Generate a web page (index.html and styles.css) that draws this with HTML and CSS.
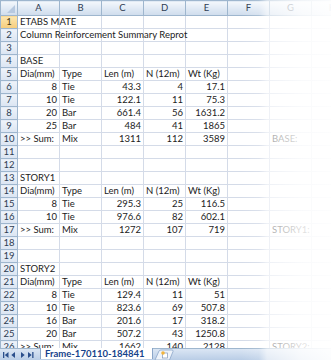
FILE: index.html
```html
<!DOCTYPE html>
<html lang="en">
<head>
  <meta charset="UTF-8" />
  <title>Frame-170110-184841</title>
  <link rel="stylesheet" href="styles.css">
</head>
<body>
  <div class="window">
    <div class="sheet">
      <table class="grid">
        <colgroup>
          <col class="c-rh">
          <col class="c-col"><col class="c-col"><col class="c-col"><col class="c-col">
          <col class="c-col"><col class="c-col"><col class="c-col"><col class="c-col">
        </colgroup>
        <thead>
          <tr>
            <th class="corner"><span class="tri"></span></th>
            <th>A</th><th>B</th><th>C</th><th>D</th><th>E</th><th>F</th><th>G</th><th>H</th>
          </tr>
        </thead>
        <tbody>
          <tr><th class="active">1</th><td class="over">ETABS MATE</td><td></td><td></td><td></td><td></td><td></td><td></td><td></td></tr>
          <tr><th>2</th><td class="over">Column Reinforcement Summary Reprot</td><td></td><td></td><td></td><td></td><td></td><td></td><td></td></tr>
          <tr><th>3</th><td></td><td></td><td></td><td></td><td></td><td></td><td></td><td></td></tr>
          <tr><th>4</th><td>BASE</td><td></td><td></td><td></td><td></td><td></td><td></td><td></td></tr>
          <tr><th>5</th><td>Dia(mm)</td><td>Type</td><td>Len (m)</td><td class="over">N (12m)</td><td>Wt (Kg)</td><td></td><td></td><td></td></tr>
          <tr><th>6</th><td class="n">8</td><td>Tie</td><td class="n">43.3</td><td class="n">4</td><td class="n">17.1</td><td></td><td></td><td></td></tr>
          <tr><th>7</th><td class="n">10</td><td>Tie</td><td class="n">122.1</td><td class="n">11</td><td class="n">75.3</td><td></td><td></td><td></td></tr>
          <tr><th>8</th><td class="n">20</td><td>Bar</td><td class="n">661.4</td><td class="n">56</td><td class="n">1631.2</td><td></td><td></td><td></td></tr>
          <tr><th>9</th><td class="n">25</td><td>Bar</td><td class="n">484</td><td class="n">41</td><td class="n">1865</td><td></td><td></td><td></td></tr>
          <tr><th>10</th><td>&gt;&gt; Sum:</td><td>Mix</td><td class="n">1311</td><td class="n">112</td><td class="n">3589</td><td></td><td class="over">BASE:</td><td></td></tr>
          <tr><th>11</th><td></td><td></td><td></td><td></td><td></td><td></td><td></td><td></td></tr>
          <tr><th>12</th><td></td><td></td><td></td><td></td><td></td><td></td><td></td><td></td></tr>
          <tr><th>13</th><td>STORY1</td><td></td><td></td><td></td><td></td><td></td><td></td><td></td></tr>
          <tr><th>14</th><td>Dia(mm)</td><td>Type</td><td>Len (m)</td><td class="over">N (12m)</td><td>Wt (Kg)</td><td></td><td></td><td></td></tr>
          <tr><th>15</th><td class="n">8</td><td>Tie</td><td class="n">295.3</td><td class="n">25</td><td class="n">116.5</td><td></td><td></td><td></td></tr>
          <tr><th>16</th><td class="n">10</td><td>Tie</td><td class="n">976.6</td><td class="n">82</td><td class="n">602.1</td><td></td><td></td><td></td></tr>
          <tr><th>17</th><td>&gt;&gt; Sum:</td><td>Mix</td><td class="n">1272</td><td class="n">107</td><td class="n">719</td><td></td><td class="over">STORY1:</td><td></td></tr>
          <tr><th>18</th><td></td><td></td><td></td><td></td><td></td><td></td><td></td><td></td></tr>
          <tr><th>19</th><td></td><td></td><td></td><td></td><td></td><td></td><td></td><td></td></tr>
          <tr><th>20</th><td>STORY2</td><td></td><td></td><td></td><td></td><td></td><td></td><td></td></tr>
          <tr><th>21</th><td>Dia(mm)</td><td>Type</td><td>Len (m)</td><td class="over">N (12m)</td><td>Wt (Kg)</td><td></td><td></td><td></td></tr>
          <tr><th>22</th><td class="n">8</td><td>Tie</td><td class="n">129.4</td><td class="n">11</td><td class="n">51</td><td></td><td></td><td></td></tr>
          <tr><th>23</th><td class="n">10</td><td>Tie</td><td class="n">823.6</td><td class="n">69</td><td class="n">507.8</td><td></td><td></td><td></td></tr>
          <tr><th>24</th><td class="n">16</td><td>Bar</td><td class="n">201.6</td><td class="n">17</td><td class="n">318.2</td><td></td><td></td><td></td></tr>
          <tr><th>25</th><td class="n">20</td><td>Bar</td><td class="n">507.2</td><td class="n">43</td><td class="n">1250.8</td><td></td><td></td><td></td></tr>
          <tr class="last"><th>26</th><td>&gt;&gt; Sum:</td><td>Mix</td><td class="n">1662</td><td class="n">140</td><td class="n">2128</td><td></td><td class="over">STORY2:</td><td></td></tr>
        </tbody>
      </table>
    </div>

    <div class="tabbar">
      <div class="nav">
        <svg width="38" height="10" viewBox="0 0 38 10">
          <g fill="#2b4f8c">
            <rect x="3" y="2" width="1.3" height="6"/>
            <polygon points="8.5,2 8.5,8 4.8,5"/>
            <polygon points="15,2 15,8 11.3,5"/>
            <polygon points="21,2 21,8 24.7,5"/>
            <polygon points="28,2 28,8 31.7,5"/>
            <rect x="32.2" y="2" width="1.3" height="6"/>
          </g>
        </svg>
      </div>
      <div class="tab">Frame-170110-184841</div>
      <div class="newtab">
        <svg width="22" height="11" viewBox="0 0 22 11">
          <path d="M1 11 L5 2 Q5.6 1 7 1 L18 1 Q19.5 1 19 2.5 L15.5 11 Z" fill="#eef3fa" stroke="#8ba6c9" stroke-width="0.8"/>
          <rect x="8.5" y="4" width="5" height="5" fill="#fff" stroke="#7f95b5" stroke-width="0.7"/>
          <circle cx="9" cy="4" r="1.8" fill="#f3b43c"/>
        </svg>
      </div>
      <div class="rest"></div>
    </div>

    <div class="fade"></div>
  </div>
</body>
</html>
```

FILE: styles.css
```css
html, body {
  margin: 0;
  padding: 0;
  background: #fff;
}
.window {
  position: relative;
  width: 331px;
  height: 360px;
  overflow: hidden;
  display: flex;
  flex-direction: column;
  font-family: Lato, "Liberation Sans", Arial, sans-serif;
}
.sheet {
  height: 348px;
  overflow: hidden;
}
.grid {
  border-collapse: collapse;
  table-layout: fixed;
  width: 353px;
  font-size: 9.5px;
  color: #1c1c1c;
}
.c-rh { width: 17px; }
.c-col { width: 42px; }
.grid tr { height: 13px; }
.grid td {
  border: 1px solid #d4dbe8;
  padding: 0 2px;
  line-height: 12px;
  white-space: nowrap;
  overflow: hidden;
}
.grid td.over { overflow: visible; }
.grid td.n { text-align: right; }
.grid th {
  font-weight: normal;
  font-size: 9.5px;
  color: #2e3c52;
  background: linear-gradient(#eef3fa, #dbe5f2);
  border: 1px solid #9eb6ce;
  padding: 0;
  line-height: 12px;
  text-align: center;
}
.grid thead tr { height: 15px; }
.grid thead th {
  background: linear-gradient(#f4f8fc, #dde7f3 60%, #cfdcec);
}
.grid th.active {
  background: linear-gradient(#fce6b0, #f7cd7c);
  color: #4a3b12;
}
.corner { position: relative; }
.tri {
  position: absolute;
  right: 2px;
  bottom: 2px;
  width: 0;
  height: 0;
  border-left: 8px solid transparent;
  border-bottom: 8px solid #b7c9e0;
}
.tabbar {
  height: 12px;
  display: flex;
  align-items: stretch;
  background: linear-gradient(#dbe6f4, #b9cde6);
  border-top: 1px solid #9eb6ce;
  box-sizing: border-box;
}
.nav {
  width: 40px;
  display: flex;
  align-items: center;
}
.tab {
  background: #fff;
  color: #15428b;
  font-weight: bold;
  font-size: 9.5px;
  line-height: 11px;
  height: 11px;
  overflow: hidden;
  padding: 0 7px 0 4px;
  margin-top: -1px;
  border-left: 1px solid #8ba6c9;
  border-right: 1px solid #8ba6c9;
}
.newtab {
  display: flex;
  align-items: flex-end;
  margin-left: 1px;
}
.rest { flex: 1; }
.fade {
  position: absolute;
  top: 0;
  right: 0;
  width: 90px;
  height: 360px;
  background: linear-gradient(to right,
    rgba(255,255,255,0) 0,
    rgba(255,255,255,0.15) 18px,
    rgba(255,255,255,0.6) 26px,
    rgba(255,255,255,0.85) 60px,
    rgba(255,255,255,0.95) 90px);
  pointer-events: none;
}
```
